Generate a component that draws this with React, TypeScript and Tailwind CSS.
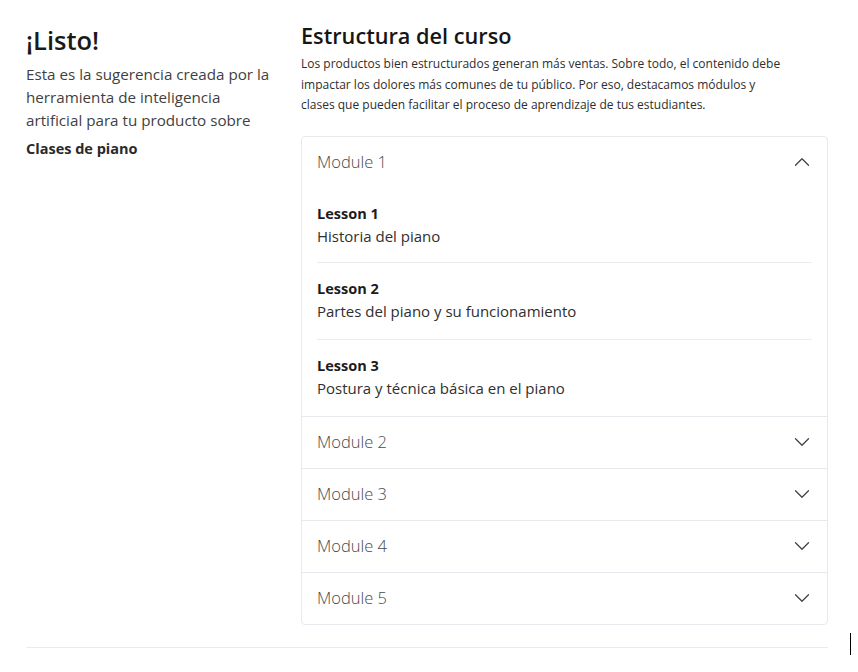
import { ChevronDown, ChevronUp } from 'lucide-react';

interface Lesson {
  title: string;
  description: string;
}

interface Module {
  name: string;
  lessons: Lesson[];
}

const modules: Module[] = [
  {
    name: 'Module 1',
    lessons: [
      { title: 'Lesson 1', description: 'Historia del piano' },
      { title: 'Lesson 2', description: 'Partes del piano y su funcionamiento' },
      { title: 'Lesson 3', description: 'Postura y técnica básica en el piano' },
    ],
  },
  { name: 'Module 2', lessons: [] },
  { name: 'Module 3', lessons: [] },
  { name: 'Module 4', lessons: [] },
  { name: 'Module 5', lessons: [] },
];

export default function App() {
  const openIndex = 0;

  return (
    <div
      className="relative min-h-[672px] bg-white text-[#1c1c1c]"
      style={{ fontFamily: '"Open Sans", "Noto Sans", sans-serif' }}
    >
      <div className="px-[26px] pt-[23px]">
        <div className="flex gap-[26px]">
          <div className="w-[249px] shrink-0">
            <h1 className="text-[25.5px] font-semibold leading-[34px] text-[#1a1a1a]">¡Listo!</h1>
            <p className="mt-[6px] text-[15.2px] leading-[23px] text-[#3f3f3f]">
              Esta es la sugerencia creada por la herramienta de inteligencia artificial para tu producto sobre
            </p>
            <p className="mt-[7px] text-[14.5px] font-bold leading-[20px] text-[#2a2a2a]">Clases de piano</p>
          </div>

          <div className="w-[527px]">
            <h2 className="text-[21.7px] font-semibold leading-[26px] text-[#161616]">Estructura del curso</h2>
            <p className="mt-[5px] max-w-[488px] text-[12px] leading-[20.5px] text-[#2e2e2e]">
              Los productos bien estructurados generan más ventas. Sobre todo, el contenido debe impactar los
              dolores más comunes de tu público. Por eso, destacamos módulos y clases que pueden facilitar el
              proceso de aprendizaje de tus estudiantes.
            </p>

            <div className="mt-[20px] rounded border border-[#e6e9ee] divide-y divide-[#e6e9ee]">
              {modules.map((module, i) => {
                const open = i === openIndex;
                return (
                  <div key={module.name}>
                    <button className="flex h-[51px] w-full items-center justify-between pl-[15px] pr-[12px] text-left">
                      <span className="text-[16.5px] font-light text-[#4a4a4a]">{module.name}</span>
                      {open ? (
                        <ChevronUp size={26} strokeWidth={1.2} className="text-[#444]" />
                      ) : (
                        <ChevronDown size={26} strokeWidth={1.2} className="text-[#444]" />
                      )}
                    </button>
                    {open && (
                      <div className="mx-[15px] divide-y divide-[#e8ebef]">
                        {module.lessons.map((lesson, j) => (
                          <div key={lesson.title} className={j === 0 ? 'pt-[16px] pb-[14px]' : 'py-[16px]'}>
                            <div className="text-[14.5px] font-bold leading-[20px] text-[#1c1c1c]">
                              {lesson.title}
                            </div>
                            <div className="text-[15px] leading-[24px] text-[#2f2f2f]">{lesson.description}</div>
                          </div>
                        ))}
                      </div>
                    )}
                  </div>
                );
              })}
            </div>
          </div>
        </div>

        <div className="mt-[22px] w-[802px] border-t border-[#e8ebef]" />
      </div>

      {/* text caret */}
      <div className="absolute left-[850px] top-[633px] h-[22px] w-px bg-black" />
    </div>
  );
}
